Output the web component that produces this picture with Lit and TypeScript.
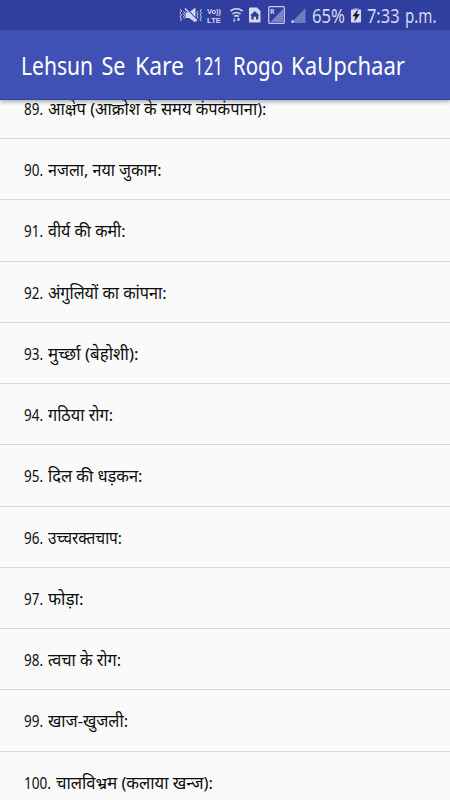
import { LitElement, html, css, svg } from "lit";
import { customElement } from "lit/decorators.js";

const TITLE: [string, number, number][] = [
  ["Lehsun", 21, 72],
  ["Se", 101.5, 24],
  ["Kare", 135, 49],
  ["121", 194, 29],
  ["Rogo", 233, 50],
  ["KaUpchaar", 291, 114],
];

const ROWS: [string, string, number][] = [
  ["89.", "आक्षेप (आक्रोश के समय कंपकंपाना):", 218.5],
  ["90.", "नजला, नया जुकाम:", 113.5],
  ["91.", "वीर्य की कमी:", 77.5],
  ["92.", "अंगुलियों का कांपना:", 118.5],
  ["93.", "मुर्च्छा (बेहोशी):", 90.5],
  ["94.", "गठिया रोग:", 65],
  ["95.", "दिल की धड़कन:", 94.5],
  ["96.", "उच्चरक्तचाप:", 74],
  ["97.", "फोड़ा:", 35.5],
  ["98.", "त्वचा के रोग:", 73],
  ["99.", "खाज-खुजली:", 80],
  ["100.", "चालविभ्रम (कलाया खन्ज):", 157],
];

@customElement("status-bar")
class StatusBar extends LitElement {
  static styles = css`
    :host { display: block; height: 30px; background: #303f9f; }
    svg { display: block; }
    text { font-family: "Noto Sans", sans-serif; fill: #d4d8f0; }
    .volte { font-family: "Liberation Sans", sans-serif; font-size: 8px; font-weight: 700; }
    .sim { font-size: 7px; font-weight: 700; }
    .info { font-size: 19px; }
  `;
  render() {
    return html`<svg width="450" height="30" viewBox="0 0 450 30">
      <g fill="none" stroke="#c5caea" stroke-width="1">
        <path d="M180 9l1.500 2-1.500 2 1.500 2-1.500 2 1.500 2-1 2M183.500 11l1 1.500-1 1.500 1 1.500-1 1.500 1 1.500M201.500 9l-1.500 2 1.500 2-1.500 2 1.500 2-1.500 2 1 2M198 11l-1 1.500 1 1.500-1 1.500 1 1.500-1 1.500" />
      </g>
      <path d="M185.500 12.500h3.500l6.500-5v15l-6.500-4.500h-3.500z" fill="#d4d8f0" />
      <path d="M186 8l11 12" stroke="#303f9f" stroke-width="1.400" />
      <path d="M185 8.500l12 12.500" stroke="#d4d8f0" stroke-width="1.400" />
      <text class="volte" x="207" y="14" textLength="14" lengthAdjust="spacingAndGlyphs">Vo))</text>
      <text class="volte" x="207" y="23" textLength="14" lengthAdjust="spacingAndGlyphs">LTE</text>
      <g fill="none" stroke="#d4d8f0" stroke-width="1.600">
        <path d="M230.500 11q6-4.500 12 0M232.500 14q4-3 8 0M234.300 16.500q2.200-1.700 4.400 0" />
      </g>
      <path d="M233.500 18v2h-1.200l2 2.500 2-2.500h-1.200v-2z" fill="#8f98d0" />
      <path d="M237.700 21v-1.500h-1l1.800-2 1.800 2h-1v1.500z" fill="#d4d8f0" />
      <path d="M250 7.500h7l3.500 3.500v10.500q0 1-1 1h-9.500q-1 0-1-1v-13q0-1 1-1z" fill="#d4d8f0" />
      <path d="M254.800 11l4.700 4.400h-1.200v4.100h-2.300v-2.800h-2.400v2.800h-2.300v-4.100h-1.200z" fill="#303f9f" />
      <rect x="268.700" y="6.700" width="15.600" height="16.600" rx="1" fill="none" stroke="#c5caea" stroke-width="1.300" />
      <path d="M283 9v13h-12.500z" fill="#7983c5" />
      <text class="sim" x="270" y="14">R</text>
      <path d="M305.500 8v15h-14.500z" fill="#6f79bf" />
      <circle cx="292.500" cy="21.500" r="1.200" fill="#d4d8f0" />
      <text class="info" x="312" y="22.500" textLength="33" lengthAdjust="spacingAndGlyphs">65%</text>
      <path d="M353.500 8h5v2h-5z" fill="#7983c5" />
      <path d="M351 9.500h10v13h-10z" fill="#d4d8f0" />
      <path d="M357.500 10.500l-4.500 5.500h3l-1.200 4.500 4.500-6h-3z" fill="#10142c" stroke="#10142c" stroke-width=".7" />
      <text class="info" x="367" y="22.500" textLength="32.500" lengthAdjust="spacingAndGlyphs">7:33</text>
      <text class="info" x="405" y="22.500" textLength="31.500" lengthAdjust="spacingAndGlyphs">p.m.</text>
    </svg>`;
  }
}

@customElement("app-root")
class AppRoot extends LitElement {
  static styles = css`
    :host { display: flex; flex-direction: column; height: 800px; overflow: hidden; background: #fafafa; font-family: "Noto Sans", "Noto Sans Devanagari", sans-serif; }
    header { position: relative; z-index: 1; flex: none; height: 69px; background: #3f51b5; border-bottom: 1px solid #2c43ae; box-shadow: 0 2px 4px rgba(0, 0, 0, .3); }
    svg { display: block; }
    .title { font-size: 25px; fill: #fff; font-weight: 400; }
    ul { list-style: none; margin: -22.200px 0 0; padding: 0; }
    li { height: 61.260px; box-sizing: border-box; border-bottom: 1px solid #d9d9d9; }
    .row { font-size: 17px; fill: #0c0c0c; }
  `;
  render() {
    return html`
      <status-bar></status-bar>
      <header>
        <svg width="450" height="69" viewBox="0 0 450 69">
          ${TITLE.map(([word, x, w]) => svg`<text class="title" x=${x} y="45" textLength=${w} lengthAdjust="spacingAndGlyphs">${word}</text>`)}
        </svg>
      </header>
      <ul>
        ${ROWS.map(([num, label, w]) => html`<li>
          <svg width="450" height="60" viewBox="0 0 450 60">
            <text class="row" x="24" y="37" textLength=${num.length > 3 ? 27 : 19} lengthAdjust="spacingAndGlyphs">${num}</text>
            <text class="row" x=${num.length > 3 ? 56 : 48} y="37" textLength=${w} lengthAdjust="spacingAndGlyphs">${label}</text>
          </svg>
        </li>`)}
      </ul>`;
  }
}
